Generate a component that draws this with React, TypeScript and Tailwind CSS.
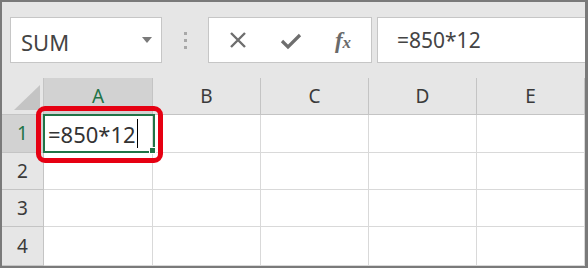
import React from "react";

const font = { fontFamily: '"Noto Sans", "Liberation Sans", Arial, sans-serif' };

function HeaderCell({ label, selected }: { label: string; selected?: boolean }) {
  return (
    <div
      className={
        "flex items-center justify-center border-r border-b border-[#c4c4c4] text-[19px] " +
        (selected ? "bg-[#d2d2d2] text-[#217346]" : "bg-[#e6e6e6] text-[#3a3a3a]")
      }
    >
      {label}
    </div>
  );
}

function RowHeader({ label, selected }: { label: string; selected?: boolean }) {
  return (
    <div
      className={
        "flex items-center justify-center border-r border-b border-[#c4c4c4] text-[19px] " +
        (selected ? "bg-[#d2d2d2] text-[#217346]" : "bg-[#e6e6e6] text-[#3a3a3a]")
      }
    >
      {label}
    </div>
  );
}

function Cell() {
  return <div className="bg-white border-r border-b border-[#d9d9d9]" />;
}

export default function App() {
  const cols = ["A", "B", "C", "D", "E"];
  return (
    <div
      className="w-[588px] h-[268px] overflow-hidden bg-[#e6e6e6] border-t-2 border-l-2 border-b-2 border-r-[3px] border-[#7a7a7a] flex flex-col"
      style={font}
    >
      {/* Toolbar */}
      <div className="h-[76px] flex items-start pt-[15px] pl-[8px] shrink-0">
        <div className="w-[152px] h-[46px] bg-white border border-[#c6c6c6] flex items-center pl-[10px] pr-[9px]">
          <span className="text-[22px] text-[#444] flex-1 leading-none pt-[3px]">SUM</span>
          <svg width="10" height="6" viewBox="0 0 10 6">
            <path d="M0 0 H10 L5 6 Z" fill="#7a7a7a" />
          </svg>
        </div>
        <div className="w-[46px] h-[46px] flex flex-col items-center justify-center gap-[4px]">
          <div className="w-[3px] h-[3px] bg-[#a8a8a8]" />
          <div className="w-[3px] h-[3px] bg-[#a8a8a8]" />
          <div className="w-[3px] h-[3px] bg-[#a8a8a8]" />
        </div>
        <div className="w-[164px] h-[46px] bg-white border border-[#c6c6c6] flex items-center">
          <div className="w-[56px] flex justify-center pl-[2px]">
            <svg width="18" height="18" viewBox="0 0 18 18">
              <path d="M2 2 L16 16 M16 2 L2 16" stroke="#6e6e6e" strokeWidth="2.4" fill="none" />
            </svg>
          </div>
          <div className="w-[52px] flex justify-center pt-[2px]">
            <svg width="22" height="18" viewBox="0 0 22 18">
              <path d="M2 9 L8 15 L20 3" stroke="#6e6e6e" strokeWidth="3.2" fill="none" />
            </svg>
          </div>
          <div className="w-[52px] flex justify-center">
            <span
              className="italic font-bold text-[#6a6a6a] text-[23px] leading-none"
              style={{ fontFamily: '"Liberation Serif", "Times New Roman", serif' }}
            >
              f<span className="text-[17px]">x</span>
            </span>
          </div>
        </div>
        <div className="flex-1 ml-[5px] h-[46px] bg-white border-t border-b border-l border-[#c6c6c6] flex items-center pl-[19px]">
          <span className="text-[21px] text-[#444] leading-none">=850*12</span>
        </div>
      </div>

      {/* Grid */}
      <div className="grid grid-cols-[42px_109px_108px_108px_108px_108px] grid-rows-[37px_38px_37px_37px_39px]">
        {/* corner */}
        <div className="bg-[#e6e6e6] border-r border-b border-[#c4c4c4] flex items-end justify-end pr-[3px] pb-[4px]">
          <svg width="26" height="25" viewBox="0 0 26 25">
            <path d="M26 0 L26 25 L0 25 Z" fill="#c4c4c4" />
          </svg>
        </div>
        {cols.map((c, i) => (
          <HeaderCell key={c} label={c} selected={i === 0} />
        ))}

        {/* row 1 */}
        <RowHeader label="1" selected />
        <div className="relative bg-white border-r border-b border-[#d9d9d9]">
          <div className="absolute left-[-1px] top-[-1px] w-[112px] h-[39px] border-2 border-[#217346] flex items-center pl-[3px]">
            <span className="text-[22px] text-[#333] leading-none">=850*12</span>
            <div className="w-px h-[29px] bg-black ml-[1px]" />
            <div className="absolute right-[-3px] bottom-[-3px] w-[7px] h-[7px] bg-[#217346] border border-white" />
          </div>
          <div className="absolute left-[-8px] top-[-9px] w-[127px] h-[57px] border-[5px] border-[#e60012] rounded-[9px]" />
        </div>
        <Cell />
        <Cell />
        <Cell />
        <Cell />

        {["2", "3", "4"].map((r) => (
          <React.Fragment key={r}>
            <RowHeader label={r} />
            <Cell />
            <Cell />
            <Cell />
            <Cell />
            <Cell />
          </React.Fragment>
        ))}
      </div>
    </div>
  );
}
